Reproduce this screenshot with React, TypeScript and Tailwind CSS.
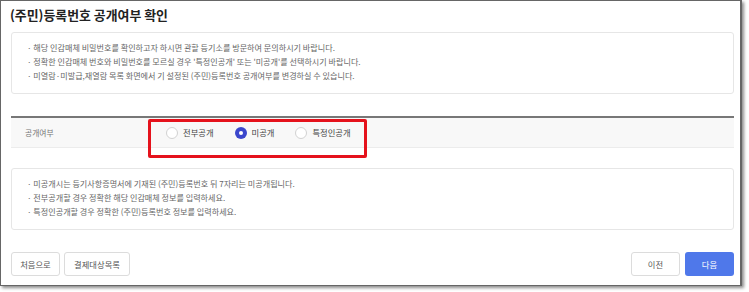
import { useState } from 'react';

const font = { fontFamily: '"Noto Sans CJK KR", "Noto Sans", sans-serif' };

const notices = [
    "해당 인감매체 비밀번호를 확인하고자 하시면 관할 등기소를 방문하여 문의하시기 바랍니다.",
    "정확한 인감매체 번호와 비밀번호를 모르실 경우 '특정인공개' 또는 '미공개'를 선택하시기 바랍니다.",
    "미열람·미발급,재열람 목록 화면에서 기 설정된 (주민)등록번호 공개여부를 변경하실 수 있습니다.",
];

const guides = [
    "미공개시는 등기사항증명서에 기재된 (주민)등록번호 뒤 7자리는 미공개됩니다.",
    "전부공개할 경우 정확한 해당 인감매체 정보를 입력하세요.",
    "특정인공개할 경우 정확한 (주민)등록번호 정보를 입력하세요.",
];

const options = ['전부공개', '미공개', '특정인공개'];

const NoticeBox = ({ lines }: { lines: string[] }) => (
    <div className="border border-[#e6e6e6] rounded-[3px] pl-[15px] pt-[8px] pb-[10px]">
        {lines.map((line) => (
            <p key={line} className="text-[8.1px] leading-[14px] text-[#666] whitespace-nowrap">
                · {line}
            </p>
        ))}
    </div>
);

const App = () => {
    const [selected, setSelected] = useState('미공개');

    return (
        <div className="w-[749px] h-[292px] bg-white" style={font}>
            <div className="relative w-[742px] h-[286px] bg-white border border-[#666] border-r-[2px] shadow-[2px_2px_3px_rgba(0,0,0,0.45)] pl-[10px] pr-[6px]">
                {/* 제목 */}
                <h1 className="text-[12.9px] font-bold text-[#222] leading-[20px] pt-[4px] -ml-[1px]">
                    (주민)등록번호 공개여부 확인
                </h1>

                <div className="mt-[7px]">
                    <NoticeBox lines={notices} />
                </div>

                {/* 공개여부 선택 */}
                <div className="mt-[22px] border-t-2 border-[#777]">
                    <div className="flex items-center h-[30px] bg-[#f8f8f8] border-b border-[#ececec]">
                        <span className="w-[137px] pl-[14px] text-[7.8px] text-[#777]">공개여부</span>
                        <div className="flex items-center">
                            {options.map((opt, i) => {
                                const checked = selected === opt;
                                return (
                                    <label
                                        key={opt}
                                        onClick={() => setSelected(opt)}
                                        className={`flex items-center gap-[5px] cursor-pointer ${i === 0 ? 'ml-[18px]' : 'ml-[21px]'}`}
                                    >
                                        <span
                                            className={`flex items-center justify-center w-[12px] h-[12px] rounded-full ${checked ? 'bg-[#3b47cc]' : 'bg-white border border-[#d2d2d2]'}`}
                                        >
                                            {checked && <span className="w-[4px] h-[4px] rounded-full bg-white" />}
                                        </span>
                                        <span className="text-[8.3px] text-[#444]">{opt}</span>
                                    </label>
                                );
                            })}
                        </div>
                    </div>
                </div>

                <div className="mt-[20px]">
                    <NoticeBox lines={guides} />
                </div>

                {/* 하단 버튼 */}
                <div className="flex justify-between mt-[22px]">
                    <div className="flex gap-[4px]">
                        <button className="w-[49px] h-[24px] border border-[#dcdcdc] rounded-[3px] bg-white text-[8.3px] text-[#555]">처음으로</button>
                        <button className="w-[66px] h-[24px] border border-[#dcdcdc] rounded-[3px] bg-white text-[8.3px] text-[#555]">결제대상목록</button>
                    </div>
                    <div className="flex gap-[5px]">
                        <button className="w-[49px] h-[24px] border border-[#dcdcdc] rounded-[3px] bg-white text-[8.3px] text-[#555]">이전</button>
                        <button className="w-[49px] h-[24px] rounded-[3px] bg-[#4f78ea] text-[8.3px] text-white">다음</button>
                    </div>
                </div>

                {/* 강조 표시 */}
                <div className="absolute left-[147px] top-[118px] w-[219px] h-[39px] border-[3px] border-[#e5121c] rounded-[2px]" />
            </div>
        </div>
    );
};

export default App;
